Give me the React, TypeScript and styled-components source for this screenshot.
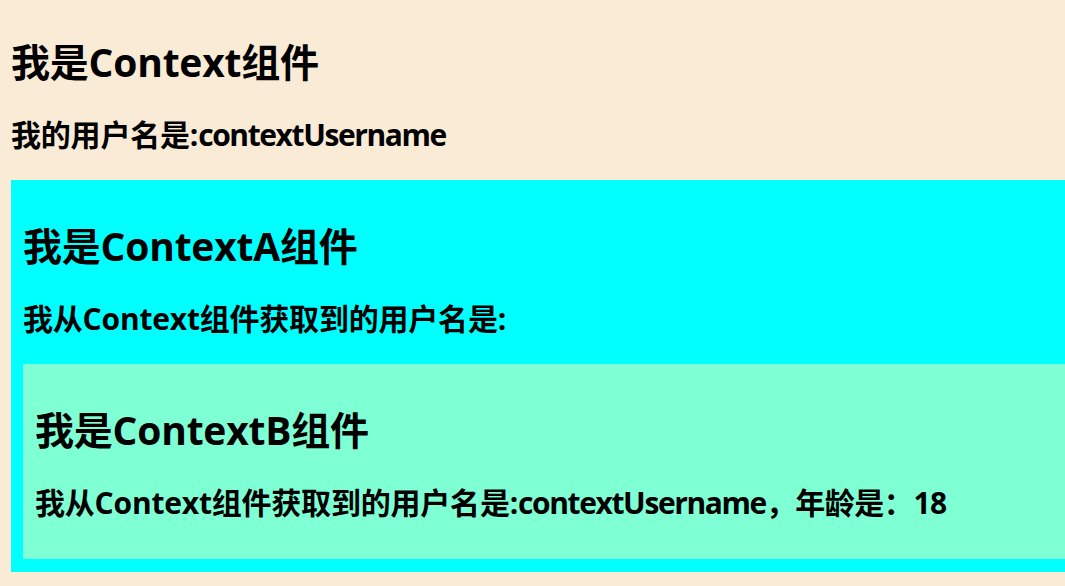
import React, { createContext, useContext } from "react";
import styled, { createGlobalStyle } from "styled-components";

const GlobalStyle = createGlobalStyle`
  html, body {
    margin: 0;
    padding: 0;
    overflow: hidden;
    background: #faebd7;
  }
  body {
    font-family: "Open Sans", "Noto Sans CJK SC", sans-serif;
    color: #000;
  }
`;

const Page = styled.div`
  width: 1100px;
  padding: 8px 0 0 11px;
  box-sizing: border-box;
`;

const Title = styled.h2`
  margin: 28px 0 27px;
  font-size: 39px;
  line-height: 52px;
  font-weight: 700;
  letter-spacing: -0.2px;
`;

const Line = styled.h3`
  margin: 27px 0 25px;
  font-size: 30px;
  line-height: 40px;
  font-weight: 700;
  letter-spacing: -0.2px;
  white-space: nowrap;
`;

const Value = styled.span`
  letter-spacing: -1.4px;
`;

const Age = styled.span`
  letter-spacing: -0.5px;
`;

const Panel = styled.div<{ $bg: string; $bottom: number }>`
  background: ${(p) => p.$bg};
  padding: 12px 0 ${(p) => p.$bottom}px 12px;
  display: flow-root;
`;

type User = { username: string; age: number };
const UserContext = createContext<User>({ username: "", age: 0 });

function ContextB() {
  const user = useContext(UserContext);
  return (
    <Panel $bg="#7fffd4" $bottom={11}>
      <Title>我是ContextB组件</Title>
      <Line>
        我从Context组件获取到的用户名是:<Value>{user.username}</Value>
        <Age>，年龄是：{user.age}</Age>
      </Line>
    </Panel>
  );
}

function ContextA() {
  return (
    <Panel $bg="#00ffff" $bottom={13}>
      <Title>我是ContextA组件</Title>
      <Line>我从Context组件获取到的用户名是:</Line>
      <ContextB />
    </Panel>
  );
}

export default function App() {
  const user: User = { username: "contextUsername", age: 18 };
  return (
    <>
      <GlobalStyle />
      <UserContext.Provider value={user}>
        <Page>
          <Title>我是Context组件</Title>
          <Line>
            我的用户名是:<Value>{user.username}</Value>
          </Line>
          <ContextA />
        </Page>
      </UserContext.Provider>
    </>
  );
}
